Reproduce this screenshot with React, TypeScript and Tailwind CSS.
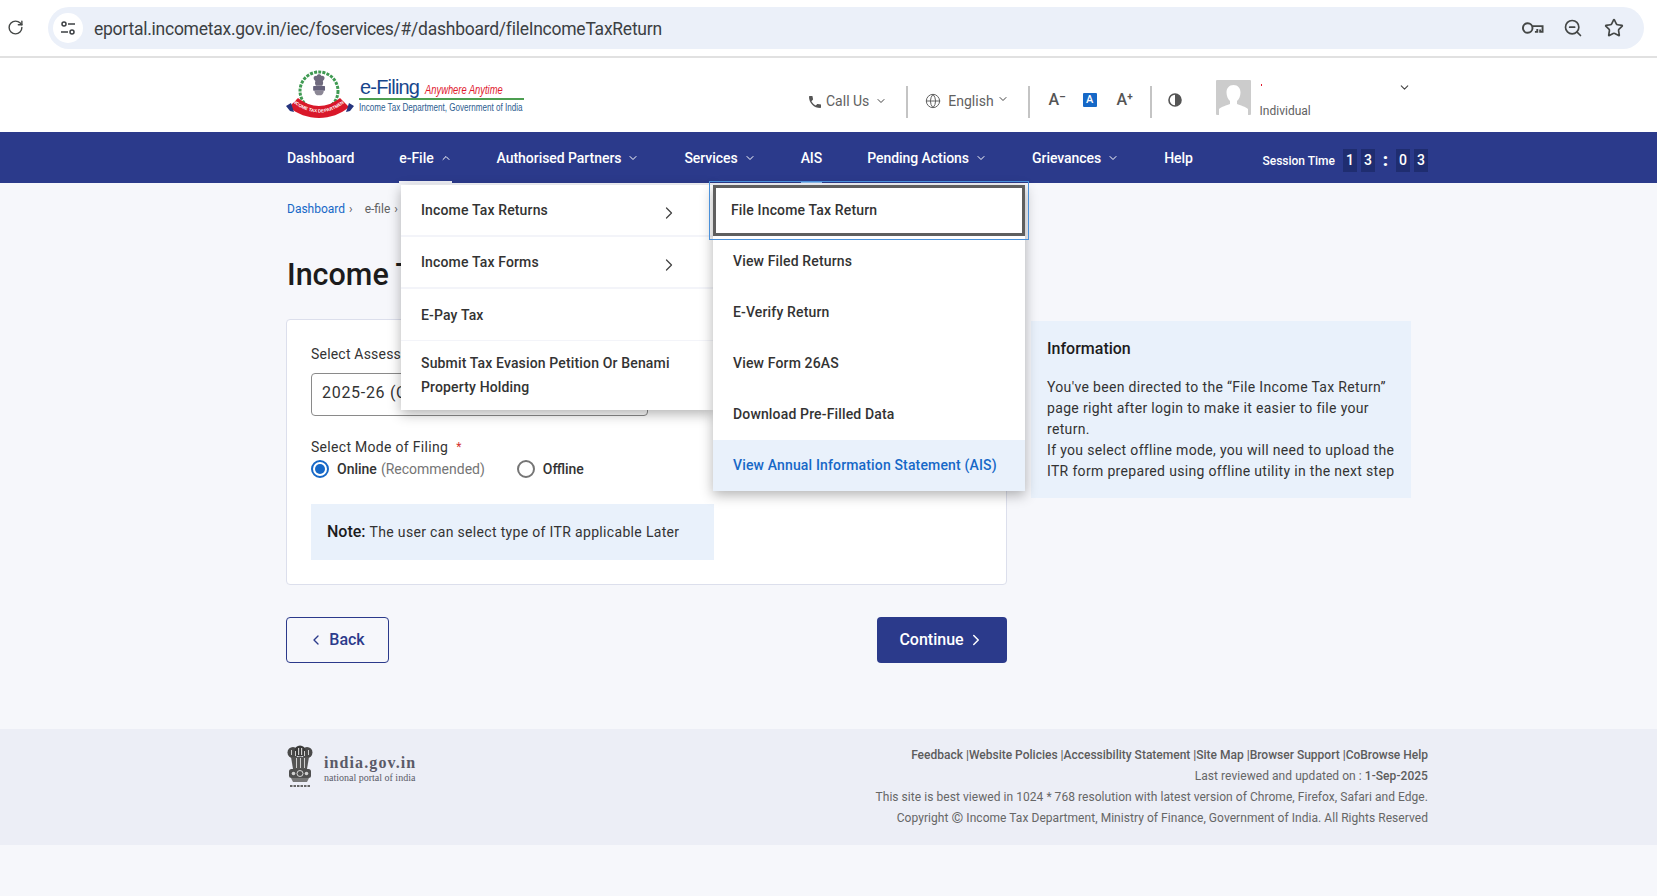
import { ChevronDown, ChevronLeft, ChevronRight, ChevronUp, Globe, RotateCw, Star, ZoomOut } from "lucide-react";

function Emblem({ className }: { className?: string }) {
  return (
    <svg viewBox="0 0 26 43" className={className}>
      <circle cx="6" cy="7.500" r="5.500" fill="#4a4a4a" />
      <circle cx="20" cy="7.500" r="5.500" fill="#4a4a4a" />
      <circle cx="13" cy="6" r="5.500" fill="#3a3a3a" />
      <path d="M4 12h18l-2 12H6z" fill="#555" />
      <path d="M11 3h1.200v7H11zM14 3h1.200v7H14zM4 5h1v5H4zM8 6h1v5H8zM17 6h1v5h-1zM21 5h1v5h-1zM9 13h1v10H9zM13 13h1v10h-1zM17 13h1v10h-1z" fill="#cfcfcf" />
      <rect x="2" y="24" width="22" height="9" rx="2.500" fill="#4f4f4f" />
      <circle cx="13" cy="28.500" r="3" fill="none" stroke="#e4e4e4" strokeWidth="0.900" />
      <circle cx="6.500" cy="28.500" r="1.800" fill="#d0d0d0" />
      <circle cx="19.500" cy="28.500" r="1.800" fill="#d0d0d0" />
      <path d="M4 33h18l-2 4H6z" fill="#777" />
      <path d="M3 41h20" stroke="#666" strokeWidth="2" strokeDasharray="2.500 1" />
    </svg>
  );
}

function Logo() {
  return (
    <svg viewBox="0 0 68 48" className="h-[48px] w-[68px] shrink-0 overflow-visible">
      <circle cx="33" cy="20" r="19" fill="none" stroke="#3f9a52" strokeWidth="3" strokeDasharray="3 1.200" />
      <circle cx="33" cy="20" r="15.500" fill="#fff" />
      <g transform="translate(24.500 2.500) scale(0.660)">
        <path d="M13 1c2 0 3 1 3.400 2.600 2-.8 4.400.4 4.800 2.600.4 2.400-1 4.200-2.600 5 1 2.400.6 5-.8 7.200H8.200C6.800 16.200 6.400 13.600 7.400 11.200 5.800 10.400 4.400 8.600 4.800 6.200 5.200 4 7.600 2.800 9.600 3.600 10 2 11 1 13 1z" fill="#6f6a7e" />
        <rect x="4" y="19" width="18" height="7" rx="1" fill="#65617a" />
        <path d="M6 26c0 4 2 6 4 7h6c2-1 4-3 4-7z" fill="#8b8795" />
      </g>
      <path d="M3 36 12 27c6 5 14 8 21 8s15-3 21-8l9 9c-8 7-19 11-30 11S11 43 3 36z" fill="#d9182a" />
      <path d="M0 35l5-3 3 9-4-1zM68 35l-5-3-3 9 4-1z" fill="#26347e" />
      <path id="logo-ribbon" d="M8 32c7 6 17 9.500 25 9.500S51 38 58 32" fill="none" />
      <text fontSize="4.500" fontWeight="700" fill="#fff" fontFamily="'Liberation Sans',sans-serif">
        <textPath href="#logo-ribbon" startOffset="50%" textAnchor="middle">INCOME TAX DEPARTMENT</textPath>
      </text>
    </svg>
  );
}

function TuneIcon() {
  return (
    <svg viewBox="0 0 16 16" className="h-[16px] w-[16px]" fill="none" stroke="#3c4043" strokeWidth="1.500">
      <circle cx="4" cy="4" r="2" />
      <path d="M8 4h7M1 12h7" />
      <circle cx="12" cy="12" r="2" />
    </svg>
  );
}

function KeyIcon() {
  return (
    <svg viewBox="0 0 24 14" className="h-[14px] w-[23px]" fill="none" stroke="#444746" strokeWidth="2">
      <circle cx="7" cy="7" r="5" />
      <path d="M12 5h10.500v6H20V8.500M17 8v3h-2.500" />
    </svg>
  );
}

function Phone() {
  return (
    <svg viewBox="0 0 24 24" className="h-[16px] w-[16px]" fill="#555">
      <path d="M6.620 10.790c1.440 2.830 3.760 5.140 6.590 6.590l2.200-2.200c.27-.27.67-.36 1.020-.24 1.120.37 2.330.57 3.570.57.55 0 1 .45 1 1V20c0 .55-.45 1-1 1-9.390 0-17-7.610-17-17 0-.55.45-1 1-1h3.500c.55 0 1 .45 1 1 0 1.250.2 2.450.57 3.570.11.35.03.74-.25 1.020l-2.200 2.200z" />
    </svg>
  );
}

function Avatar() {
  return (
    <svg viewBox="0 0 35 35" className="h-[35px] w-[35px] shrink-0">
      <rect width="35" height="35" rx="1" fill="#cccccc" />
      <path d="M17.500 5c4.500 0 7 3.200 7 7.500 0 3.500-1.500 7-3.500 8.500v3c3 1.600 9 2.500 11 5v6.500H3V29c2-2.500 8-3.400 11-5v-3c-2-1.500-3.500-5-3.500-8.500C10.500 8.200 13 5 17.500 5z" fill="#fff" />
    </svg>
  );
}

function Contrast() {
  return (
    <svg viewBox="0 0 14 14" className="h-[14px] w-[14px]">
      <circle cx="7" cy="7" r="6" fill="#fff" stroke="#555" strokeWidth="1.600" />
      <path d="M7 1a6 6 0 0 1 0 12z" fill="#555" />
    </svg>
  );
}

function NavItem({ label, open, active }: { label: string; open?: boolean; active?: string }) {
  return (
    <div className="relative flex h-full items-center pt-[1px] text-[14px] font-medium tracking-[-0.05px] text-white">
      <span>{label}</span>
      {open ? <ChevronUp className="ml-[6px] h-[12px] w-[12px]" strokeWidth={2} /> : null}
      {open === false ? <ChevronDown className="ml-[6px] h-[12px] w-[12px]" strokeWidth={2} /> : null}
      {active ? <div className={active} /> : null}
    </div>
  );
}

function Digit({ value }: { value: string }) {
  return <div className="flex h-[23px] w-[14px] items-center justify-center bg-[#1f2d70] text-[14px] font-medium text-white">{value}</div>;
}

function Radio({ checked }: { checked?: boolean }) {
  return checked ? (
    <div className="flex h-[18px] w-[18px] items-center justify-center rounded-full border-2 border-[#1668c7]">
      <div className="h-[10px] w-[10px] rounded-full bg-[#1668c7]" />
    </div>
  ) : (
    <div className="h-[18px] w-[18px] rounded-full border-2 border-[#757575]" />
  );
}

const firstMenu = ["Income Tax Returns", "Income Tax Forms"];
const secondMenu = ["View Filed Returns", "E-Verify Return", "View Form 26AS", "Download Pre-Filled Data"];

function Dropdown() {
  return (
    <div className="absolute left-[115px] top-[2px] z-10 flex items-start text-[14px] font-medium tracking-[0.15px] text-[#333]">
      <div className="w-[312px] bg-white shadow-[0_4px_12px_rgba(0,0,0,0.3)]">
        {firstMenu.map((item) => (
          <div key={item} className="flex h-[52px] items-center justify-between border-b-2 border-[#f3f4f9] pl-[20px] pr-[34px]">
            <span>{item}</span>
            <ChevronRight className="mt-[5px] h-[20px] w-[20px] text-[#444]" strokeWidth={1.500} />
          </div>
        ))}
        <div className="flex h-[52px] items-center border-b border-[#f3f4f9] pl-[20px] pt-[1px]">E-Pay Tax</div>
        <div className="h-[69px] pl-[20px] pt-[10px] leading-[24px]">
          Submit Tax Evasion Petition Or Benami
          <br />
          Property Holding
        </div>
      </div>
      <div className="w-[312px] bg-white shadow-[0_4px_12px_rgba(0,0,0,0.3)]">
        <div className="flex h-[51px] items-center border-[3px] border-[#5f5f5f] pl-[15px] outline-[1.500px] outline-offset-[3px] outline-[#4a90d9]">File Income Tax Return</div>
        {secondMenu.map((item) => (
          <div key={item} className="flex h-[51px] items-center pl-[20px]">
            {item}
          </div>
        ))}
        <div className="flex h-[51px] items-center bg-[#e9f1fb] pl-[20px] text-[#1668c7]">View Annual Information Statement (AIS)</div>
      </div>
    </div>
  );
}

export default function App() {
  return (
    <div className="flex h-[896px] w-full flex-col overflow-hidden bg-[#f6f7fb] font-['Roboto',sans-serif] text-[#333]">
      {/* browser bar */}
      <div className="flex h-[58px] shrink-0 items-center border-b-2 border-[#e1e1e1] bg-white pb-[1px] pl-[7px] pr-[13px]">
        <RotateCw className="h-[17px] w-[17px] text-[#444746]" strokeWidth={2} />
        <div className="ml-[24px] flex h-[42px] flex-1 items-center rounded-full bg-[#ebf0f9] pl-[5px] pr-[20px]">
          <div className="flex h-[30px] w-[30px] items-center justify-center rounded-full bg-white">
            <TuneIcon />
          </div>
          <span className="ml-[11px] pt-[3px] text-[17.500px] tracking-[-0.25px] text-[#3c4043]">eportal.incometax.gov.in/iec/foservices/#/dashboard/fileIncomeTaxReturn</span>
          <div className="ml-auto flex items-center">
            <KeyIcon />
            <ZoomOut className="ml-[19px] h-[20px] w-[20px] text-[#444746]" strokeWidth={2} />
            <Star className="ml-[21px] h-[20px] w-[20px] text-[#444746]" strokeWidth={2} />
          </div>
        </div>
      </div>

      {/* site header */}
      <header className="h-[74px] shrink-0 bg-white">
        <div className="ml-[286px] flex h-full w-[1142px] items-center">
          <div className="flex w-[237px] shrink-0 items-center">
            <Logo />
            <div className="ml-[5px] mt-[3px] w-[165px] font-['Liberation_Sans',sans-serif]">
              <div className="flex h-[20px] items-center whitespace-nowrap">
                <span className="ml-[1px] text-[20px] tracking-[-0.8px] text-[#17468c]">e-Filing</span>
                <span className="ml-[6px] mt-[5px] origin-left scale-x-[0.78] text-[12px] italic text-[#e0182d]">Anywhere Anytime</span>
              </div>
              <div className="mt-[1px] h-[2px] bg-[#4c9e50]" />
              <div className="origin-left scale-x-[0.77] whitespace-nowrap text-[10.500px] text-[#2b5c8f]">Income Tax Department, Government of India</div>
            </div>
          </div>
          <div className="ml-[284px] mt-[14px] flex items-center text-[14px] text-[#616161]">
            <Phone />
            <span className="mb-[2px] ml-[3px]">Call Us</span>
            <ChevronDown className="mb-[2px] ml-[6px] h-[12px] w-[12px] text-[#444]" strokeWidth={2} />
            <div className="ml-[19px] h-[32px] w-[2px] bg-[#c4c4c4]" />
            <Globe className="mb-[2px] ml-[17px] h-[16px] w-[16px]" strokeWidth={1.500} />
            <span className="mb-[2px] ml-[7px]">English</span>
            <ChevronDown className="mb-[6px] ml-[3px] h-[12px] w-[12px] text-[#444]" strokeWidth={2} />
            <div className="ml-[19px] h-[32px] w-[2px] bg-[#c4c4c4]" />
            <span className="mb-[4px] ml-[19px] w-[15px] whitespace-nowrap text-[16px] font-medium leading-none text-[#555]">
              A<sup className="text-[10px] font-bold">–</sup>
            </span>
            <span className="mb-[4px] ml-[19px] flex h-[14px] w-[14px] items-center justify-center rounded-[1px] bg-[#1668c7] text-[11px] font-medium text-white">A</span>
            <span className="mb-[4px] ml-[20px] w-[15px] whitespace-nowrap text-[16px] font-medium leading-none text-[#555]">
              A<sup className="text-[10px] font-bold">+</sup>
            </span>
            <div className="ml-[18px] h-[32px] w-[2px] bg-[#c4c4c4]" />
            <div className="mb-[5px] ml-[16px]">
              <Contrast />
            </div>
          </div>
          <div className="ml-[34px] flex self-start pt-[22px]">
            <Avatar />
            <div className="ml-[9px] flex w-[151px] flex-col">
              <div className="flex h-[14px] items-start justify-between">
                <span className="ml-[1px] mt-[4px] h-[2px] w-[1px] bg-[#e0182d]" />
                <ChevronDown className="mr-0 mt-[1px] h-[13px] w-[13px] text-[#444]" strokeWidth={2} />
              </div>
              <span className="mt-[10px] text-[12px] leading-[14px] text-[#616161]">Individual</span>
            </div>
          </div>
        </div>
      </header>

      {/* main menu */}
      <nav className="h-[51px] shrink-0 bg-[#2b3a8b]">
        <div className="ml-[286px] flex h-full w-[1142px] items-center gap-[45px] pl-[1px]">
          <NavItem label="Dashboard" />
          <NavItem label="e-File" open active="absolute -bottom-[1px] left-0 h-[3px] w-full bg-[#f0f1f7]" />
          <NavItem label="Authorised Partners" open={false} />
          <NavItem label="Services" open={false} />
          <NavItem label="AIS" active="absolute bottom-0 left-0 h-[2px] w-full bg-[#8fbdf0]" />
          <NavItem label="Pending Actions" open={false} />
          <NavItem label="Grievances" open={false} />
          <NavItem label="Help" />
          <div className="ml-auto flex items-center gap-[4px] pt-[6px]">
            <span className="mr-[4px] text-[12px] font-medium text-white">Session Time</span>
            <Digit value="1" />
            <Digit value="3" />
            <span className="-mt-[2px] w-[13px] text-center text-[18px] font-black leading-none text-white">:</span>
            <Digit value="0" />
            <Digit value="3" />
          </div>
        </div>
      </nav>

      <main className="relative ml-[286px] h-[546px] w-[1142px] shrink-0">
        <Dropdown />
        <div className="mt-[17px] flex h-[18px] items-center pl-[1px] text-[12px] text-[#616161]">
          <span className="text-[#1668c7]">Dashboard</span>
          <span className="ml-[4px]">›</span>
          <span className="ml-[12px]">e-file</span>
          <span className="ml-[4px]">›</span>
        </div>
        <h1 className="mt-[37px] h-[40px] pl-[1px] text-[30.500px] font-medium leading-[40px] text-[#1c1c1c]">Income Tax Return</h1>
        <div className="mt-[24px] flex items-start">
          <div className="w-[721px]">
            <div className="h-[266px] rounded-[4px] border border-[#dcdfec] bg-white pl-[24px] pt-[24px]">
              <div className="text-[14px] leading-[21px] tracking-[0.2px] text-[#333]">Select Assessment Year *</div>
              <div className="mt-[8px] flex h-[43px] w-[337px] items-center rounded-[4px] border border-[#8a8a8a] pb-[4px] pl-[10px] text-[16px] tracking-[0.7px] text-[#333]">2025-26 (Current A.Y.)</div>
              <div className="mt-[21px] flex items-center text-[14px] leading-[21px] tracking-[0.3px] text-[#333]">
                Select Mode of Filing
                <span className="ml-[8px] text-[12px] text-[#d32f2f]">*</span>
              </div>
              <div className="flex h-[22px] items-center text-[14px]">
                <Radio checked />
                <span className="ml-[8px] font-medium">Online</span>
                <span className="ml-[4px] text-[#757575]">(Recommended)</span>
                <div className="ml-[32px]">
                  <Radio />
                </div>
                <span className="ml-[8px] font-medium">Offline</span>
              </div>
              <div className="mt-[24px] flex h-[56px] w-[403px] items-center bg-[#e9f1fb] pl-[16px] text-[14px] tracking-[0.33px]">
                <span className="mr-[4px] text-[16px] font-medium tracking-normal text-[#1c1c1c]">Note:</span>
                The user can select type of ITR applicable Later
              </div>
            </div>
            <div className="mt-[32px] flex justify-between">
              <button className="flex h-[46px] w-[103px] items-center justify-center rounded-[4px] border border-[#2b3a8b] pr-[2px] text-[16px] font-medium text-[#2b3a8b]">
                <ChevronLeft className="mr-[5px] h-[16px] w-[16px]" strokeWidth={2} />
                Back
              </button>
              <button className="flex h-[46px] w-[130px] items-center justify-center rounded-[4px] bg-[#2b3a8b] text-[16px] font-medium text-white">
                Continue
                <ChevronRight className="ml-[3px] h-[18px] w-[18px]" strokeWidth={2} />
              </button>
            </div>
          </div>
          <div className="ml-[24px] mt-[2px] h-[177px] w-[380px] bg-[#e9f1fb] px-[16px] pt-[17px]">
            <div className="text-[16px] font-medium leading-[22px] text-[#1c1c1c]">Information</div>
            <div className="mt-[17px] text-[14px] leading-[21px] tracking-[0.33px] text-[#333]">
              You've been directed to the “File Income Tax Return” page right after login to make it easier to file your return.
              <br />
              If you select offline mode, you will need to upload the ITR form prepared using offline utility in the next step
            </div>
          </div>
        </div>
      </main>

      <footer className="h-[116px] shrink-0 bg-[#eceef6]">
        <div className="ml-[286px] flex h-full w-[1142px] items-start justify-between">
          <div className="ml-[1px] mt-[16px] flex items-start">
            <Emblem className="h-[43px] w-[26px]" />
            <div className="ml-[11px] mt-[9px] font-['Liberation_Serif',serif] text-[#5a5a68]">
              <div className="text-[16px] font-bold leading-[18px] tracking-[1.1px]">india.gov.in</div>
              <div className="text-[10px] leading-[12px]">national portal of india</div>
            </div>
          </div>
          <div className="pt-[16px] text-right text-[12px] leading-[21px] tracking-[0.05px] text-[#666]">
            <div className="font-medium tracking-normal text-[#5c5c5c]">Feedback |Website Policies |Accessibility Statement |Site Map |Browser Support |CoBrowse Help</div>
            <div>
              Last reviewed and updated on : <span className="font-medium text-[#5c5c5c]">1-Sep-2025</span>
            </div>
            <div>This site is best viewed in 1024 * 768 resolution with latest version of Chrome, Firefox, Safari and Edge.</div>
            <div className="flex h-[21px] items-center justify-end">
              Copyright <span className="mx-[3px] text-[15px] leading-none">©</span> Income Tax Department, Ministry of Finance, Government of India. All Rights Reserved
            </div>
          </div>
        </div>
      </footer>
    </div>
  );
}
